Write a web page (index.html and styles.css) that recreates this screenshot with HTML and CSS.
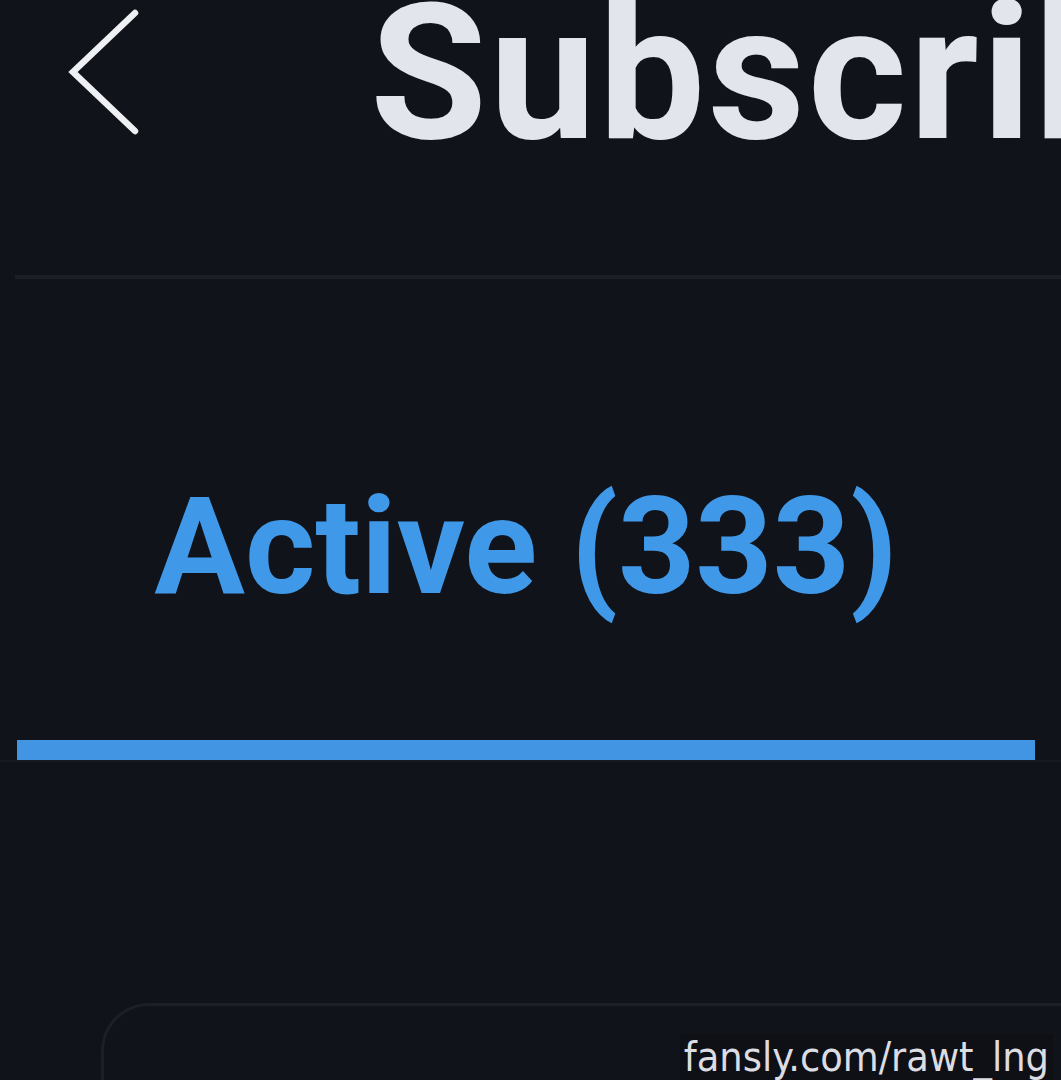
FILE: index.html
```html
<!DOCTYPE html>
<html lang="en">
<head>
    <meta charset="UTF-8">
    <title>Subscribers</title>
    <link rel="stylesheet" href="styles.css">
</head>
<body>
<div class="page">
    <div class="topbar">
        <div class="back">
            <svg width="80" height="140" viewBox="0 0 80 140">
                <polyline points="67,6 5,65 67,124" fill="none" stroke="#eef0f4" stroke-width="6.5" stroke-linecap="round" stroke-linejoin="miter"/>
            </svg>
        </div>
        <h1 class="title">Subscribers</h1>
    </div>
    <div class="divider"></div>
    <div class="tabs">
        <div class="tab active">
            <span class="tab-label">Active (333)</span>
            <div class="tab-bar"></div>
        </div>
    </div>
    <div class="list">
        <div class="card"></div>
    </div>
    <div class="watermark">fansly.com/rawt_lng</div>
</div>
</body>
</html>
```

FILE: styles.css
```css
* {
    margin: 0;
    padding: 0;
    box-sizing: border-box;
}

html, body {
    height: 100%;
    background-color: #10131a;
    overflow: hidden;
}

.page {
    position: relative;
    height: 1080px;
    overflow: hidden;
    font-family: Roboto, "Liberation Sans", sans-serif;
}

.topbar {
    display: flex;
    flex-direction: row;
    align-items: flex-start;
    height: 275px;
    white-space: nowrap;
    overflow: hidden;
}

.back {
    flex-shrink: 0;
    margin: 7px 0 0 68px;
    width: 80px;
}

.title {
    margin-left: 222px;
    padding-top: 8px;
    font-size: 190px;
    line-height: 130px;
    font-weight: 700;
    color: #e3e5ec;
    letter-spacing: 2.5px;
}

.divider {
    margin-left: 15px;
    height: 4px;
    background-color: #1b1e25;
}

.tabs {
    display: flex;
    flex-direction: row;
    border-bottom: 2px solid #161920;
}

.tab {
    display: flex;
    flex-direction: column;
    align-items: center;
    width: 1018px;
    margin-left: 17px;
}

.tab-label {
    margin-top: 188px;
    font-size: 135px;
    line-height: 160px;
    font-weight: 700;
    color: #3f98e8;
}

.tab-bar {
    margin-top: 113px;
    width: 100%;
    height: 20px;
    background-color: #4195e2;
}

.list {
    padding: 241px 0 0 101px;
}

.card {
    height: 200px;
    border: 3px solid #1c1f26;
    border-right: none;
    border-radius: 48px 0 0 0;
    background-color: #10131a;
}

.watermark {
    position: absolute;
    right: 8px;
    bottom: 0;
    padding: 0 4px;
    font-family: "DejaVu Sans", sans-serif;
    font-stretch: condensed;
    font-size: 41px;
    line-height: 46px;
    color: #dcdde2;
    background-color: rgba(14, 16, 20, 0.7);
}
```
